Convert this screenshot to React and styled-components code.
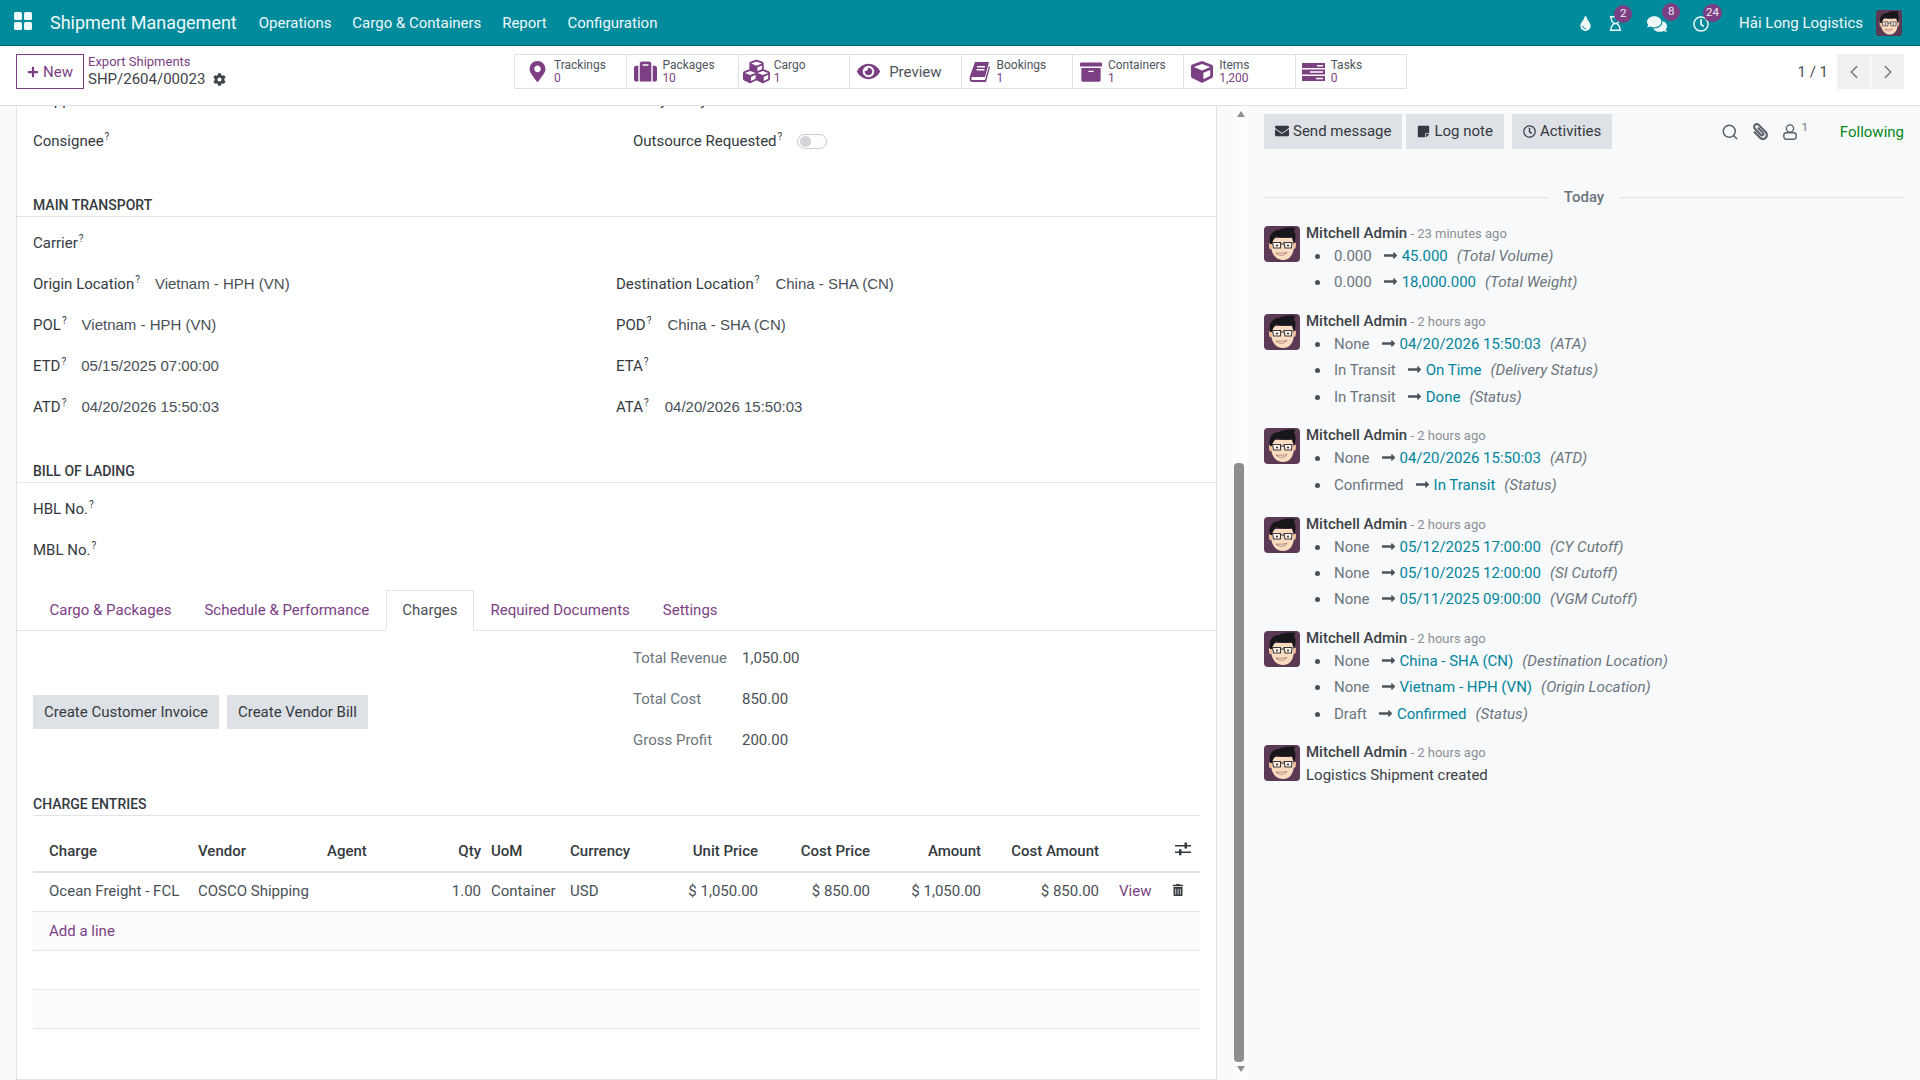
import React from "react";
import styled, { createGlobalStyle } from "styled-components";
import {
  FaArchive,
  FaCog,
  FaComments,
  FaCube,
  FaCubes,
  FaEnvelope,
  FaEye,
  FaLongArrowAltRight,
  FaMapMarkerAlt,
  FaPaperclip,
  FaPlus,
  FaRegClock,
  FaRegHourglass,
  FaStickyNote,
  FaSuitcase,
  FaTint,
  FaTrashAlt,
} from "react-icons/fa";
import { ChevronLeft, ChevronRight, Search } from "lucide-react";

const purple = "#7c3f84";
const teal = "#008b9c";
const link = "#00859c";

const GlobalStyle = createGlobalStyle`
  html, body {
    margin: 0;
    padding: 0;
    height: 100%;
    overflow: hidden;
    background: #fff;
    font-family: Roboto, "Noto Sans", sans-serif;
    font-size: 15px;
    color: #343a40;
  }
  * {
    box-sizing: border-box;
  }
`;

const Page = styled.div`
  display: flex;
  flex-direction: column;
  height: 100vh;
`;

/* top navbar */
const NavBar = styled.header`
  display: flex;
  align-items: center;
  flex: 0 0 46px;
  padding: 0 18px 0 14px;
  background: ${teal};
  border-bottom: 1px solid #00646f;
  color: #eef8f9;
`;

const AppsIcon = styled.svg`
  width: 18px;
  height: 18px;
  margin-right: 18px;
  margin-top: -3px;
`;

const Brand = styled.span`
  font-size: 18px;
  margin-right: 22px;
`;

const NavItem = styled.span`
  font-size: 15px;
  margin-right: 20.800px;
`;

const NavRight = styled.div`
  display: flex;
  align-items: center;
  margin-left: auto;
`;

const NavIcon = styled.span`
  position: relative;
  display: flex;
  align-items: center;
  justify-content: center;
  width: ${(p) => p.$w || 16}px;
  margin-right: ${(p) => p.$mr || 0}px;
  margin-top: 2px;
  font-size: 15px;
`;

const Badge = styled.span`
  position: absolute;
  top: -11px;
  left: ${(p) => p.$left}px;
  min-width: 18px;
  height: 18px;
  padding: 0 3px;
  border-radius: 9px;
  background: ${purple};
  color: #f3e9f4;
  font-size: 11.500px;
  line-height: 16px;
  text-align: center;
`;

const UserName = styled.span`
  font-size: 15px;
  margin-right: 13px;
`;

const AvatarSvg = styled.svg`
  display: block;
  flex: none;
  width: ${(p) => p.$size}px;
  height: ${(p) => p.$size}px;
`;

function Avatar({ size }) {
  return (
    <AvatarSvg $size={size} viewBox="0 0 36 36">
      <rect width="36" height="36" rx="4" fill="#5b3a55" />
      <path d="M7 19c0 9 5 15 12 15s11-6 11-15l-2-7H9z" fill="#f9dcc0" />
      <path d="M5 17h3v6H6c-1 0-1-4-1-6zM30 17h2c0 3 0 6-2 6z" fill="#eebd96" />
      <path
        d="M6 18C4 9 9 4 15 4c3-2 10-3 17-2-2 1-2 2-2 3 2 2 2 8 0 12l-2-6c-5 1-12 1-16-1-1 3-3 3-4 8z"
        fill="#17171a"
      />
      <path
        d="M8.500 16.500h8v5.500H9.500zM20 16.500h8l-.5 5.500H21zM16.500 18h3.500"
        fill="#ffffffa0"
        stroke="#3a3a3e"
        strokeWidth="1.100"
      />
      <circle cx="13" cy="19.400" r="1" fill="#26262a" />
      <circle cx="24" cy="19.400" r="1" fill="#26262a" />
      <path d="M12 27c3 3 8 3 11-.5-3 .8-8 1-11 .5z" fill="#fff" stroke="#8a3a2c" strokeWidth=".6" />
    </AvatarSvg>
  );
}

/* control panel */
const ControlPanel = styled.div`
  display: flex;
  align-items: flex-start;
  flex: 0 0 60px;
  padding: 8px 16px 0 16px;
  border-bottom: 1px solid #dfe1e4;
`;

const TitleArea = styled.div`
  display: flex;
  flex: 0 0 498px;
`;

const NewButton = styled.button`
  display: flex;
  align-items: center;
  gap: 4px;
  width: 68px;
  height: 35px;
  padding: 0 0 0 10px;
  border: 1px solid ${purple};
  background: #fff;
  color: ${purple};
  font: inherit;
  font-size: 15px;
`;

const Crumbs = styled.div`
  margin-left: 4px;
  margin-top: -1px;
  line-height: 17px;
`;

const CrumbLink = styled.div`
  color: ${purple};
  font-size: 13px;
  line-height: 17px;
`;

const CrumbCurrent = styled.div`
  display: flex;
  align-items: center;
  gap: 8px;
  color: #3f444a;
  font-size: 15px;
  line-height: 18px;
`;

const StatBar = styled.div`
  display: grid;
  grid-template-columns: repeat(8, 1fr);
  width: 893px;
  height: 35px;
  border: 1px solid #dee0e4;
`;

const Stat = styled.div`
  display: flex;
  align-items: center;
  padding-left: ${(p) => (p.$wide ? 7 : 3)}px;
  border-left: 1px solid #dee0e4;
  &:first-child {
    border-left: 0;
  }
`;

const StatIcon = styled.span`
  display: flex;
  align-items: center;
  justify-content: center;
  flex: 0 0 30px;
  margin-right: 2px;
  color: ${purple};
  font-size: ${(p) => p.$size || 22}px;
`;

const StatLabel = styled.div`
  color: #4f555c;
  font-size: 12px;
  line-height: 14px;
`;

const StatValue = styled.div`
  color: ${purple};
  font-size: 12px;
  line-height: 13px;
`;

const PreviewLabel = styled.span`
  color: #4f555c;
  font-size: 15px;
  margin-left: 4px;
`;

const Pager = styled.div`
  display: flex;
  align-items: center;
  margin-left: auto;
`;

const PagerText = styled.span`
  color: #4a4f55;
  font-size: 15px;
  margin-right: 8px;
`;

const PagerButton = styled.span`
  display: flex;
  align-items: center;
  justify-content: center;
  width: 33px;
  height: 35px;
  margin-left: 1px;
  background: #f0f0f1;
  color: #6b7077;
`;

const Content = styled.div`
  display: flex;
  flex: 1;
  min-height: 0;
`;

/* form side */
const FormPane = styled.div`
  display: flex;
  flex: 0 0 1233px;
  padding: 0 16px 0 16px;
  background: #f9fafb;
`;

const Sheet = styled.div`
  flex: 1;
  height: 974px;
  overflow: hidden;
  background: #fff;
  border: solid #e2e4e8;
  border-width: 0 1px 1px 1px;
`;

const SheetInner = styled.div`
  margin-top: -26.500px;
`;

const Row = styled.div`
  display: grid;
  grid-template-columns: ${(p) => (p.$wide ? "583px 1fr" : "600px 1fr")};
  height: 41px;
  margin-top: ${(p) => p.$mt || 0}px;
  padding-left: 16px;
  align-items: center;
`;

const Field = styled.div`
  display: flex;
  align-items: center;
`;

const Label = styled.span`
  color: #343a40;
  margin-right: ${(p) => p.$mr ?? 12}px;
  sup {
    font-size: 10px;
    line-height: 0;
    margin-left: 1px;
  }
`;

const Value = styled.span`
  color: #495057;
`;

const FormValue = styled(Value)`
  margin-bottom: 2px;
  font-family: "Liberation Sans", Arial, sans-serif;
`;

const SectionTitle = styled.div`
  display: flex;
  align-items: flex-end;
  height: 55px;
  margin: ${(p) => (p.$inset ? "0 16px" : "0")};
  padding: 0 0 0 ${(p) => (p.$inset ? 0 : 16)}px;
  border-bottom: 1px solid #e2e4e8;
  color: #343a40;
  font-size: 14px;
  font-weight: 500;
  line-height: 21px;
  text-transform: uppercase;
`;

const Toggle = styled.span`
  display: inline-block;
  width: 30px;
  height: 15px;
  margin-left: 3px;
  border: 1px solid #c9ccd0;
  border-radius: 8px;
  background: #fff;
  &::before {
    content: "";
    display: block;
    width: 11px;
    height: 11px;
    margin: 1px 0 0 2px;
    border-radius: 50%;
    background: #d3d5d8;
  }
`;

const Tabs = styled.div`
  display: flex;
  height: 41px;
  margin-top: 19px;
  padding-left: 16px;
  border-bottom: 1px solid #e2e4e8;
`;

const Tab = styled.div`
  display: flex;
  align-items: center;
  height: 41px;
  padding: 0 15.500px;
  color: ${(p) => (p.$active ? "#495057" : purple)};
  background: ${(p) => (p.$active ? "#fff" : "transparent")};
  border: 1px solid ${(p) => (p.$active ? "#e2e4e8" : "transparent")};
  border-bottom-color: ${(p) => (p.$active ? "#fff" : "transparent")};
`;

const ChargesTop = styled.div`
  display: grid;
  grid-template-columns: 600px 1fr;
  margin-top: 7px;
  padding-left: 16px;
`;

const ButtonGroup = styled.div`
  display: flex;
  gap: 8px;
  align-self: center;
  margin-top: 26px;
`;

const GrayButton = styled.button`
  display: flex;
  align-items: center;
  height: ${(p) => p.$h || 34}px;
  margin-right: ${(p) => p.$mr || 0}px;
  padding: 0 11px 1px;
  border: 0;
  background: #dee1e5;
  color: #343a40;
  font: inherit;
  svg {
    margin-right: 4px;
  }
`;

const TotalRow = styled.div`
  display: flex;
  align-items: center;
  height: 41px;
`;

const TotalLabel = styled.span`
  flex: 0 0 109px;
  color: #6c757d;
`;

const ChargeTable = styled.table`
  width: 1167px;
  margin: 16px 0 0 16px;
  border-collapse: collapse;
  table-layout: fixed;
  font-size: 15px;
`;

const Th = styled.th`
  height: 40px;
  padding: 0 4px 0 ${(p) => p.$pl || 4}px;
  border-bottom: 2px solid #dee2e6;
  color: #343a40;
  font-weight: 500;
  text-align: ${(p) => (p.$right ? "right" : "left")};
`;

const Td = styled.td`
  padding: 0 4px 1px ${(p) => p.$pl || 4}px;
  color: ${(p) => (p.$link ? purple : "#495057")};
  text-align: ${(p) => (p.$right ? "right" : "left")};
  white-space: nowrap;
`;

const Tr = styled.tr`
  height: ${(p) => p.$h || 39}px;
  border-bottom: 1px solid #e2e4e8;
  background: ${(p) => (p.$shade ? "#fbfbfc" : "#fff")};
`;

const TrashCell = styled(Td)`
  padding-left: 2px;
`;

/* fake scrollbar */
const ScrollBar = styled.div`
  display: flex;
  flex-direction: column;
  align-items: center;
  flex: 0 0 15px;
  background: #fdfdfe;
`;

const ScrollArrow = styled.span`
  width: 0;
  height: 0;
  margin-top: ${(p) => p.$mt}px;
  border-left: 4.500px solid transparent;
  border-right: 4.500px solid transparent;
  ${(p) => (p.$up ? "border-bottom" : "border-top")}: 6px solid #8f8f8f;
`;

const ScrollThumb = styled.span`
  width: 10px;
  height: 599px;
  margin: 346px 3px 0 0;
  border-radius: 4px;
  background: #8e8e8e;
`;

/* chatter */
const Chatter = styled.aside`
  flex: 1;
  padding: 8px 16px 0 16px;
  background: #f8f9fa;
`;

const ChatterTop = styled.div`
  display: flex;
  align-items: center;
  height: 35px;
`;

const ChatterActions = styled.div`
  display: flex;
  align-items: center;
  margin-left: auto;
  color: #5c6269;
`;

const ChatIcon = styled.span`
  display: flex;
  margin-right: ${(p) => p.$mr}px;
  font-size: 15px;
  transform: ${(p) => (p.$flip ? "scaleX(-1)" : "none")};
`;

const Sup = styled.sup`
  font-size: 11px;
  line-height: 0;
  margin: 0 32px 8px 5px;
  color: #6c757d;
`;

const Following = styled.span`
  color: #008818;
`;

const DayLine = styled.div`
  display: flex;
  align-items: center;
  gap: 16px;
  height: 22px;
  margin: 37px 0 14px;
  color: #6c757d;
  font-weight: 500;
  font-size: 15px;
  &::before,
  &::after {
    content: "";
    flex: 1;
    height: 1px;
    background: #dfe1e4;
  }
`;

const Message = styled.div`
  display: flex;
  gap: 6px;
  margin-bottom: 14.500px;
  padding-top: 4px;
`;

const MessageHead = styled.div`
  height: 17px;
  line-height: 15px;
  font-size: 13px;
  color: #8a9097;
`;

const Author = styled.span`
  color: #3c4147;
  font-size: 15px;
  font-weight: 500;
`;

const Changes = styled.ul`
  margin: 0;
  padding: 0 0 0 28px;
  list-style: none;
  color: #6c757d;
`;

const Change = styled.li`
  position: relative;
  height: 26.300px;
  line-height: 26.300px;
  &::before {
    content: "";
    position: absolute;
    left: -19px;
    top: 11px;
    width: 5px;
    height: 5px;
    border-radius: 50%;
    background: #495057;
  }
`;

const Arrow = styled.span`
  display: inline-flex;
  margin: 0 4px 0 11px;
  color: #4f555c;
  vertical-align: -2px;
`;

const NewValue = styled.span`
  color: ${link};
`;

const FieldName = styled.em`
  margin-left: 9px;
  font-size: 15.200px;
`;

const PlainBody = styled.div`
  margin-top: 2px;
  line-height: 22px;
  color: #3c4147;
`;

const stats = [
  { label: "Trackings", value: "0", icon: <FaMapMarkerAlt />, size: 21, wide: true },
  { label: "Packages", value: "10", icon: <FaSuitcase />, size: 23 },
  { label: "Cargo", value: "1", icon: <FaCubes />, size: 27 },
  { preview: true },
  { label: "Bookings", value: "1", icon: <BookIcon /> },
  { label: "Containers", value: "1", icon: <FaArchive />, size: 22 },
  { label: "Items", value: "1,200", icon: <FaCube />, size: 22 },
  { label: "Tasks", value: "0", icon: <TasksIcon /> },
];

function BookIcon() {
  return (
    <svg width="22" height="22" viewBox="0 0 22 22" fill="currentColor">
      <path d="M6 1h14l-4 15H3c-1 1-1 2 0 3h13l4-14 1 1-4 15H3c-2 0-3-3-2-6zM8 5v1.500h8V5zM7.500 8v1.500h8V8z" fillRule="evenodd" />
    </svg>
  );
}

function TasksIcon() {
  return (
    <svg width="23" height="20" viewBox="0 0 23 20" fill="currentColor">
      <path d="M0 1h23v5H0zM15 3v1.400h6V3zM0 7.500h23v5H0zM8 9.300v1.400h13V9.300zM0 14h23v5H0zM14 15.800v1.400h7v-1.400z" fillRule="evenodd" />
    </svg>
  );
}

function SlidersIcon() {
  return (
    <svg width="16" height="14" viewBox="0 0 16 14" fill="#343a40">
      <path d="M0 3h16v1.400H0zM9.500 0.500h2.500v6H9.500zM0 9.600h16V11H0zM4 7.200h2.500v6H4z" />
    </svg>
  );
}

function FollowersIcon() {
  return (
    <svg width="14" height="16" viewBox="0 0 14 16" fill="none" stroke="currentColor" strokeWidth="1.400">
      <circle cx="7" cy="4.500" r="3.600" />
      <rect x="0.800" y="8.800" width="12.400" height="6.400" rx="2.600" />
    </svg>
  );
}

const messages = [
  {
    time: "23 minutes ago",
    lines: [
      ["0.000", "45.000", "Total Volume"],
      ["0.000", "18,000.000", "Total Weight"],
    ],
  },
  {
    time: "2 hours ago",
    lines: [
      ["None", "04/20/2026 15:50:03", "ATA"],
      ["In Transit", "On Time", "Delivery Status"],
      ["In Transit", "Done", "Status"],
    ],
  },
  {
    time: "2 hours ago",
    lines: [
      ["None", "04/20/2026 15:50:03", "ATD"],
      ["Confirmed", "In Transit", "Status"],
    ],
  },
  {
    time: "2 hours ago",
    lines: [
      ["None", "05/12/2025 17:00:00", "CY Cutoff"],
      ["None", "05/10/2025 12:00:00", "SI Cutoff"],
      ["None", "05/11/2025 09:00:00", "VGM Cutoff"],
    ],
  },
  {
    time: "2 hours ago",
    lines: [
      ["None", "China - SHA (CN)", "Destination Location"],
      ["None", "Vietnam - HPH (VN)", "Origin Location"],
      ["Draft", "Confirmed", "Status"],
    ],
  },
  { time: "2 hours ago", body: "Logistics Shipment created" },
];

function FieldLabel({ children, mr }) {
  return (
    <Label $mr={mr}>
      {children}
      <sup>?</sup>
    </Label>
  );
}

export default function App() {
  return (
    <Page>
      <GlobalStyle />
      <NavBar>
        <AppsIcon viewBox="0 0 18 18" fill="#eef8f9">
          <rect x="0" y="0" width="8" height="8" rx="1.500" />
          <rect x="10" y="0" width="8" height="8" rx="1.500" />
          <rect x="0" y="10" width="8" height="8" rx="1.500" />
          <rect x="10" y="10" width="8" height="8" rx="1.500" />
        </AppsIcon>
        <Brand>Shipment Management</Brand>
        <NavItem>Operations</NavItem>
        <NavItem>Cargo &amp; Containers</NavItem>
        <NavItem>Report</NavItem>
        <NavItem>Configuration</NavItem>
        <NavRight>
          <NavIcon $mr={14}>
            <FaTint />
          </NavIcon>
          <NavIcon $mr={24}>
            <FaRegHourglass />
            <Badge $left={7}>2</Badge>
          </NavIcon>
          <NavIcon $w={20} $mr={26}>
            <FaComments size={20} />
            <Badge $left={15}>8</Badge>
          </NavIcon>
          <NavIcon $mr={30}>
            <FaRegClock size={18} />
            <Badge $left={10}>24</Badge>
          </NavIcon>
          <UserName>Hải Long Logistics</UserName>
          <Avatar size={26} />
        </NavRight>
      </NavBar>

      <ControlPanel>
        <TitleArea>
          <NewButton>
            <FaPlus size={12} />
            New
          </NewButton>
          <Crumbs>
            <CrumbLink>Export Shipments</CrumbLink>
            <CrumbCurrent>
              SHP/2604/00023
              <FaCog size={13} />
            </CrumbCurrent>
          </Crumbs>
        </TitleArea>
        <StatBar>
          {stats.map((s, i) =>
            s.preview ? (
              <Stat key={i}>
                <StatIcon $size={23}>
                  <FaEye />
                </StatIcon>
                <PreviewLabel>Preview</PreviewLabel>
              </Stat>
            ) : (
              <Stat key={i} $wide={s.wide}>
                <StatIcon $size={s.size}>{s.icon}</StatIcon>
                <div>
                  <StatLabel>{s.label}</StatLabel>
                  <StatValue>{s.value}</StatValue>
                </div>
              </Stat>
            )
          )}
        </StatBar>
        <Pager>
          <PagerText>1 / 1</PagerText>
          <PagerButton>
            <ChevronLeft size={22} strokeWidth={1.4} />
          </PagerButton>
          <PagerButton>
            <ChevronRight size={22} strokeWidth={1.4} />
          </PagerButton>
        </Pager>
      </ControlPanel>

      <Content>
        <FormPane>
          <Sheet>
            <SheetInner>
              <Row>
                <Field>
                  <FieldLabel>Shipper</FieldLabel>
                </Field>
                <Field>
                  <FieldLabel>Entry Delay</FieldLabel>
                </Field>
              </Row>
              <Row>
                <Field>
                  <FieldLabel>Consignee</FieldLabel>
                </Field>
                <Field>
                  <FieldLabel mr={12}>Outsource Requested</FieldLabel>
                  <Toggle />
                </Field>
              </Row>

              <SectionTitle>Main Transport</SectionTitle>
              <Row $wide $mt={6}>
                <Field>
                  <FieldLabel>Carrier</FieldLabel>
                </Field>
              </Row>
              <Row $wide>
                <Field>
                  <FieldLabel mr={15}>Origin Location</FieldLabel>
                  <FormValue>Vietnam - HPH (VN)</FormValue>
                </Field>
                <Field>
                  <FieldLabel mr={16}>Destination Location</FieldLabel>
                  <FormValue>China - SHA (CN)</FormValue>
                </Field>
              </Row>
              <Row $wide>
                <Field>
                  <FieldLabel mr={15}>POL</FieldLabel>
                  <FormValue>Vietnam - HPH (VN)</FormValue>
                </Field>
                <Field>
                  <FieldLabel mr={16}>POD</FieldLabel>
                  <FormValue>China - SHA (CN)</FormValue>
                </Field>
              </Row>
              <Row $wide>
                <Field>
                  <FieldLabel mr={15}>ETD</FieldLabel>
                  <FormValue>05/15/2025 07:00:00</FormValue>
                </Field>
                <Field>
                  <FieldLabel>ETA</FieldLabel>
                </Field>
              </Row>
              <Row $wide>
                <Field>
                  <FieldLabel mr={15}>ATD</FieldLabel>
                  <FormValue>04/20/2026 15:50:03</FormValue>
                </Field>
                <Field>
                  <FieldLabel mr={16}>ATA</FieldLabel>
                  <FormValue>04/20/2026 15:50:03</FormValue>
                </Field>
              </Row>

              <SectionTitle>Bill of Lading</SectionTitle>
              <Row $mt={6}>
                <Field>
                  <FieldLabel>HBL No.</FieldLabel>
                </Field>
              </Row>
              <Row>
                <Field>
                  <FieldLabel>MBL No.</FieldLabel>
                </Field>
              </Row>

              <Tabs>
                <Tab>Cargo &amp; Packages</Tab>
                <Tab>Schedule &amp; Performance</Tab>
                <Tab $active>Charges</Tab>
                <Tab>Required Documents</Tab>
                <Tab>Settings</Tab>
              </Tabs>

              <ChargesTop>
                <ButtonGroup>
                  <GrayButton>Create Customer Invoice</GrayButton>
                  <GrayButton>Create Vendor Bill</GrayButton>
                </ButtonGroup>
                <div>
                  <TotalRow>
                    <TotalLabel>Total Revenue</TotalLabel>
                    <Value>1,050.00</Value>
                  </TotalRow>
                  <TotalRow>
                    <TotalLabel>Total Cost</TotalLabel>
                    <Value>850.00</Value>
                  </TotalRow>
                  <TotalRow>
                    <TotalLabel>Gross Profit</TotalLabel>
                    <Value>200.00</Value>
                  </TotalRow>
                </div>
              </ChargesTop>

              <SectionTitle $inset>Charge Entries</SectionTitle>
              <ChargeTable>
                <colgroup>
                  {[161, 129, 97, 65, 81, 114, 82, 112, 111, 118, 67, 30].map((w, i) => (
                    <col key={i} width={w} />
                  ))}
                </colgroup>
                <thead>
                  <tr>
                    <Th $pl={16}>Charge</Th>
                    <Th>Vendor</Th>
                    <Th>Agent</Th>
                    <Th $right>Qty</Th>
                    <Th $pl={6}>UoM</Th>
                    <Th>Currency</Th>
                    <Th $right>Unit Price</Th>
                    <Th $right>Cost Price</Th>
                    <Th $right>Amount</Th>
                    <Th $right>Cost Amount</Th>
                    <Th />
                    <Th $pl={5}>
                      <SlidersIcon />
                    </Th>
                  </tr>
                </thead>
                <tbody>
                  <Tr $h={40}>
                    <Td $pl={16}>Ocean Freight - FCL</Td>
                    <Td>COSCO Shipping</Td>
                    <Td />
                    <Td $right>1.00</Td>
                    <Td $pl={6}>Container</Td>
                    <Td>USD</Td>
                    <Td $right>$ 1,050.00</Td>
                    <Td $right>$ 850.00</Td>
                    <Td $right>$ 1,050.00</Td>
                    <Td $right>$ 850.00</Td>
                    <Td $pl={16} $link>
                      View
                    </Td>
                    <TrashCell>
                      <FaTrashAlt size={12} color="#343a40" />
                    </TrashCell>
                  </Tr>
                  <Tr $shade>
                    <Td $pl={16} $link colSpan={12}>
                      Add a line
                    </Td>
                  </Tr>
                  <Tr>
                    <Td colSpan={12} />
                  </Tr>
                  <Tr $shade>
                    <Td colSpan={12} />
                  </Tr>
                </tbody>
              </ChargeTable>
            </SheetInner>
          </Sheet>
        </FormPane>

        <ScrollBar>
          <ScrollArrow $up $mt={5} />
          <ScrollThumb />
          <ScrollArrow $mt={4} />
        </ScrollBar>

        <Chatter>
          <ChatterTop>
            <GrayButton $h={35} $mr={4}>
              <FaEnvelope size={14} />
              Send message
            </GrayButton>
            <GrayButton $h={35} $mr={8}>
              <FaStickyNote size={13} />
              Log note
            </GrayButton>
            <GrayButton $h={35}>
              <FaRegClock size={13} />
              Activities
            </GrayButton>
            <ChatterActions>
              <ChatIcon $mr={13}>
                <Search size={18} strokeWidth={2} />
              </ChatIcon>
              <ChatIcon $mr={14} $flip>
                <FaPaperclip size={17} />
              </ChatIcon>
              <ChatIcon $mr={0}>
                <FollowersIcon />
              </ChatIcon>
              <Sup>1</Sup>
              <Following>Following</Following>
            </ChatterActions>
          </ChatterTop>

          <DayLine>Today</DayLine>

          {messages.map((m, i) => (
            <Message key={i}>
              <Avatar size={36} />
              <div>
                <MessageHead>
                  <Author>Mitchell Admin</Author> - {m.time}
                </MessageHead>
                {m.body ? (
                  <PlainBody>{m.body}</PlainBody>
                ) : (
                  <Changes>
                    {m.lines.map(([from, to, field]) => (
                      <Change key={field}>
                        {from}
                        <Arrow>
                          <FaLongArrowAltRight size={15} />
                        </Arrow>
                        <NewValue>{to}</NewValue>
                        <FieldName>({field})</FieldName>
                      </Change>
                    ))}
                  </Changes>
                )}
              </div>
            </Message>
          ))}
        </Chatter>
      </Content>
    </Page>
  );
}
